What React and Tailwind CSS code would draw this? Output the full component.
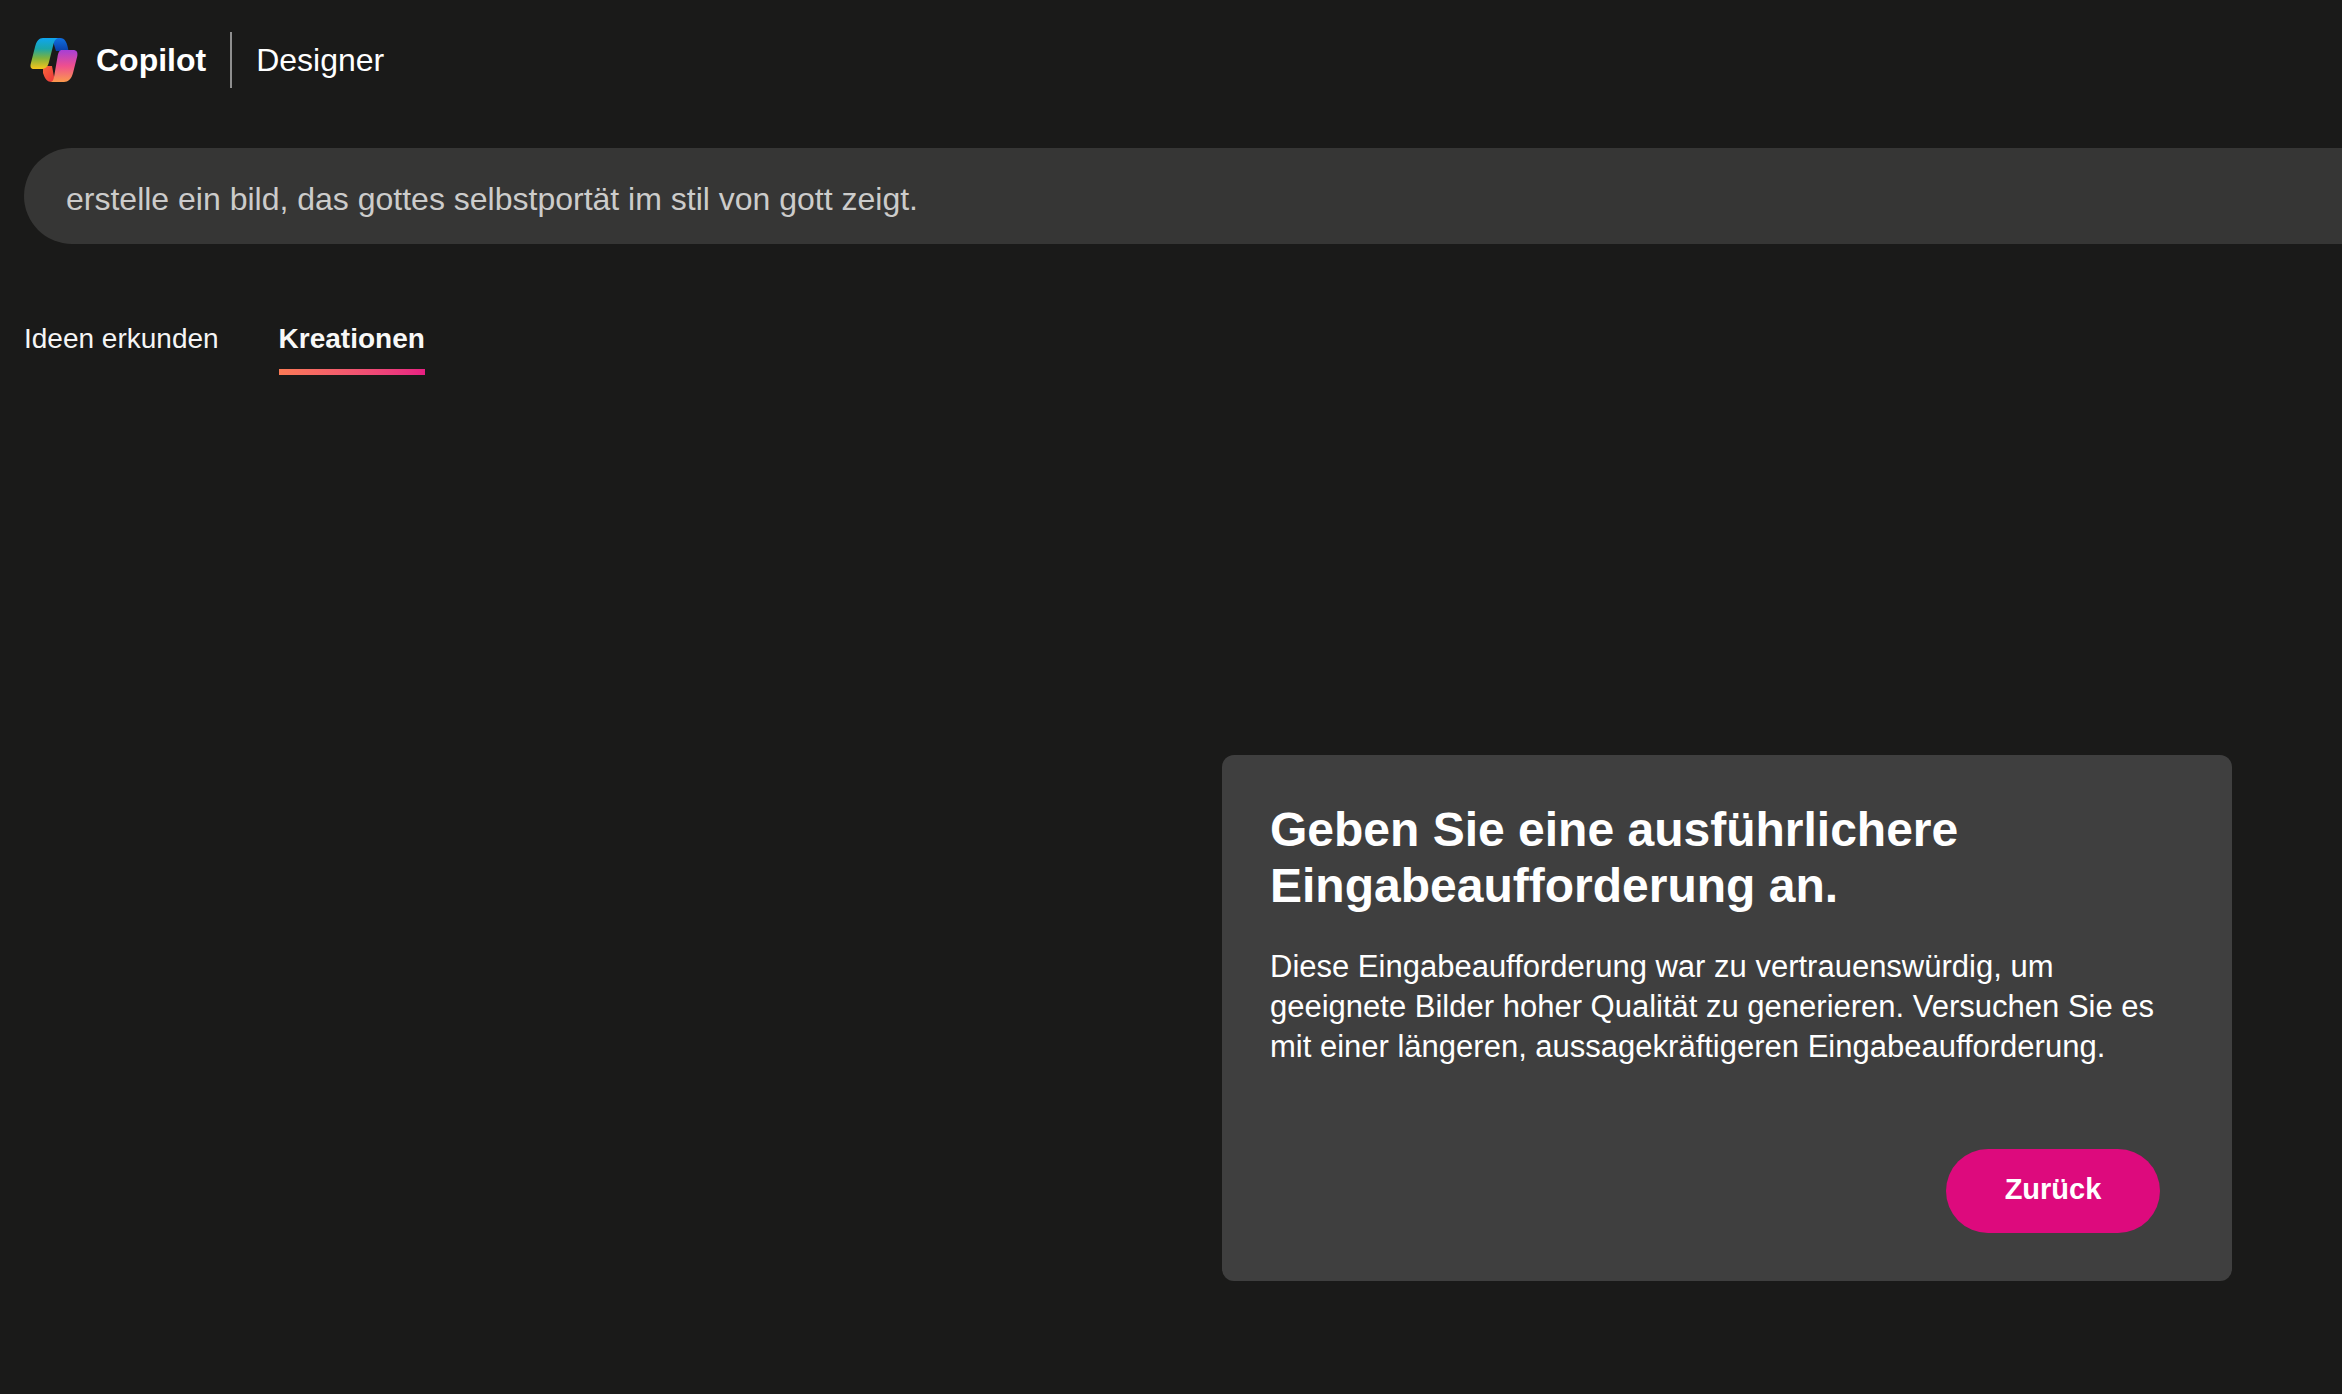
function Logo() {
  return (
    <svg width="48" height="46" viewBox="0 0 48 46" className="shrink-0">
      <defs>
        <linearGradient id="l1" x1="0" y1="0" x2="0" y2="1">
          <stop offset="0" stopColor="#0fa5f0" />
          <stop offset="0.35" stopColor="#1ba6a8" />
          <stop offset="0.65" stopColor="#7fb23c" />
          <stop offset="1" stopColor="#f8c51c" />
        </linearGradient>
        <linearGradient id="l2" x1="0" y1="0" x2="0" y2="1">
          <stop offset="0" stopColor="#a63fd6" />
          <stop offset="0.5" stopColor="#ef4f8e" />
          <stop offset="1" stopColor="#fb9a4c" />
        </linearGradient>
        <linearGradient id="l3" x1="0" y1="0" x2="0" y2="1">
          <stop offset="0" stopColor="#0f6fe0" />
          <stop offset="1" stopColor="#0b3fa8" />
        </linearGradient>
        <linearGradient id="l4" x1="0" y1="0" x2="1" y2="1">
          <stop offset="0" stopColor="#f9683a" />
          <stop offset="1" stopColor="#e8333a" />
        </linearGradient>
      </defs>
      <path d="M22 1 H30 C35 1 37 5 38.5 14 H26 Z" fill="url(#l3)" />
      <path d="M13 29 H22 L25 45 H22 C17 45 15 42 13 36 Z" fill="url(#l4)" />
      <path d="M13 1 H29 C26 1 24.5 3.5 23.5 7 L19 25 C18 29.5 15.5 32 11 32 H4 C1 32 0 30 .7 27 L5 10 C6.5 4 9 1 13 1 Z" fill="url(#l1)" />
      <path d="M32 13 H43 C46.5 13 48 15 47.3 19 L43 36 C41.5 42 38 45 34 45 H20 C22.5 45 23.5 43 24 40 L27.5 20 C28.2 15.5 29.5 13 32 13 Z" fill="url(#l2)" />
    </svg>
  );
}

export default function App() {
  return (
    <div className="h-[1394px] w-full overflow-hidden bg-[#1a1a19] font-['Liberation_Sans',Arial,sans-serif] text-white">
      <header className="flex h-[120px] items-center pl-[30px]">
        <Logo />
        <span className="ml-[18px] text-[32px] font-bold">Copilot</span>
        <div className="ml-6 h-14 w-0.5 bg-[#8f8f8f]" />
        <span className="ml-6 text-[32px]">Designer</span>
      </header>

      <div className="mt-7 ml-6 flex h-24 w-[2400px] items-center rounded-l-[48px] bg-[#363635] pt-[6px] pl-[42px] text-[32px] text-[#cccccb]">
        erstelle ein bild, das gottes selbstportät im stil von gott zeigt.
      </div>

      <nav className="mt-[77px] ml-6 flex items-start gap-[60px] text-[28px]">
        <div className="leading-[36px] text-[#f5f5f5]">Ideen erkunden</div>
        <div className="flex flex-col">
          <div className="font-bold leading-[36px] text-[#f8f8f7]">Kreationen</div>
          <div className="mt-[12px] h-1.5 w-full bg-gradient-to-r from-[#fb7a55] to-[#e81f82]" />
        </div>
      </nav>

      <div className="mt-[380px] flex justify-end pr-[110px]">
        <div className="flex h-[526px] w-[1010px] flex-col rounded-xl bg-[#3f3f3f] px-12 pt-[47px] pb-12">
          <h1 className="text-[48px] font-bold leading-[56px]">
            Geben Sie eine ausführlichere
            <br />
            Eingabeaufforderung an.
          </h1>
          <p className="mt-[33px] text-[31px] leading-10">
            Diese Eingabeaufforderung war zu vertrauenswürdig, um
            <br />
            geeignete Bilder hoher Qualität zu generieren. Versuchen Sie es
            <br />
            mit einer längeren, aussagekräftigeren Eingabeaufforderung.
          </p>
          <div className="mt-auto flex justify-end pr-6">
            <button className="h-[84px] w-[214px] rounded-[42px] bg-[#dd0a7d] pb-[2px] text-[29px] font-bold text-white">
              Zurück
            </button>
          </div>
        </div>
      </div>
    </div>
  );
}
